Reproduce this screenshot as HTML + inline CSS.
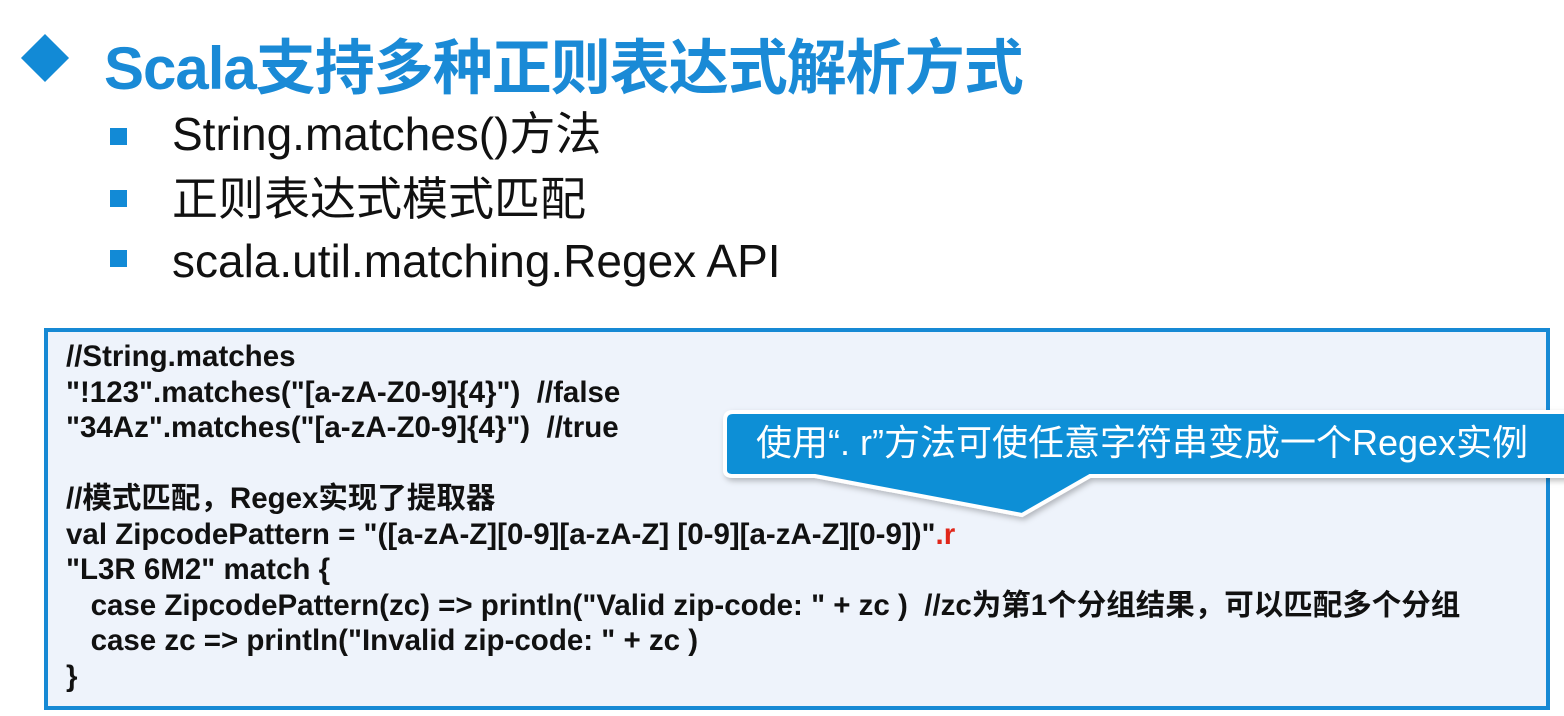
<!DOCTYPE html>
<html><head><meta charset="utf-8"><style>
html,body{margin:0;padding:0;}
body{width:1564px;height:716px;background:#fff;position:relative;overflow:hidden;font-family:"Liberation Sans","Noto Sans CJK SC",sans-serif;}
.dia{position:absolute;left:28px;top:41px;width:34px;height:34px;background:#128ad6;transform:rotate(45deg);}
.title{position:absolute;left:104px;top:20px;font-size:60px;font-weight:bold;color:#1a8ad6;letter-spacing:-1px;white-space:nowrap;}
.sq{position:absolute;left:110px;width:17px;height:17px;background:#128ad6;}
.bt{position:absolute;left:172px;font-size:46px;line-height:50px;color:#111;white-space:nowrap;}
.box{position:absolute;left:44px;top:328px;width:1498px;height:374px;border:4px solid #1689d4;background:#eef3fb;}
.code{position:absolute;left:66px;top:339px;font-size:29.5px;font-weight:bold;line-height:35.5px;color:#111;white-space:pre;}
.red{color:#e0261a;}
.call{position:absolute;left:0;top:0;}
.ct{position:absolute;left:756px;top:421px;font-size:36px;line-height:44px;color:#fff;white-space:nowrap;}
</style></head><body>
<div class="dia"></div>
<div class="title">Scala支持多种正则表达式解析方式</div>
<div class="sq" style="top:128px"></div><div class="bt" style="top:109px">String.matches()方法</div>
<div class="sq" style="top:190px"></div><div class="bt" style="top:174px">正则表达式模式匹配</div>
<div class="sq" style="top:250px"></div><div class="bt" style="top:236px">scala.util.matching.Regex API</div>
<div class="box"></div>
<div class="code">//String.matches
"!123".matches("[a-zA-Z0-9]{4}")  //false
"34Az".matches("[a-zA-Z0-9]{4}")  //true

//模式匹配，Regex实现了提取器
val ZipcodePattern = "([a-zA-Z][0-9][a-zA-Z] [0-9][a-zA-Z][0-9])"<span class="red">.r</span>
"L3R 6M2" match {
   case ZipcodePattern(zc) =&gt; println("Valid zip-code: " + zc )  //zc为第1个分组结果，可以匹配多个分组
   case zc =&gt; println("Invalid zip-code: " + zc )
}</div>
<svg class="call" width="1564" height="716">
<defs><filter id="sh" x="-5%" y="-20%" width="110%" height="150%"><feDropShadow dx="2" dy="3" stdDeviation="3" flood-color="#000" flood-opacity="0.25"/></filter></defs>
<path d="M733 412 Q725 412 725 420 L725 470 Q725 476 733 476 L815 476 L1022 515 L1090 476 L1570 476 L1570 412 Z" fill="#0f8fd6" stroke="#fff" stroke-width="4" filter="url(#sh)"/>
</svg>
<div class="ct">使用“. r”方法可使任意字符串变成一个Regex实例</div>
</body></html>
